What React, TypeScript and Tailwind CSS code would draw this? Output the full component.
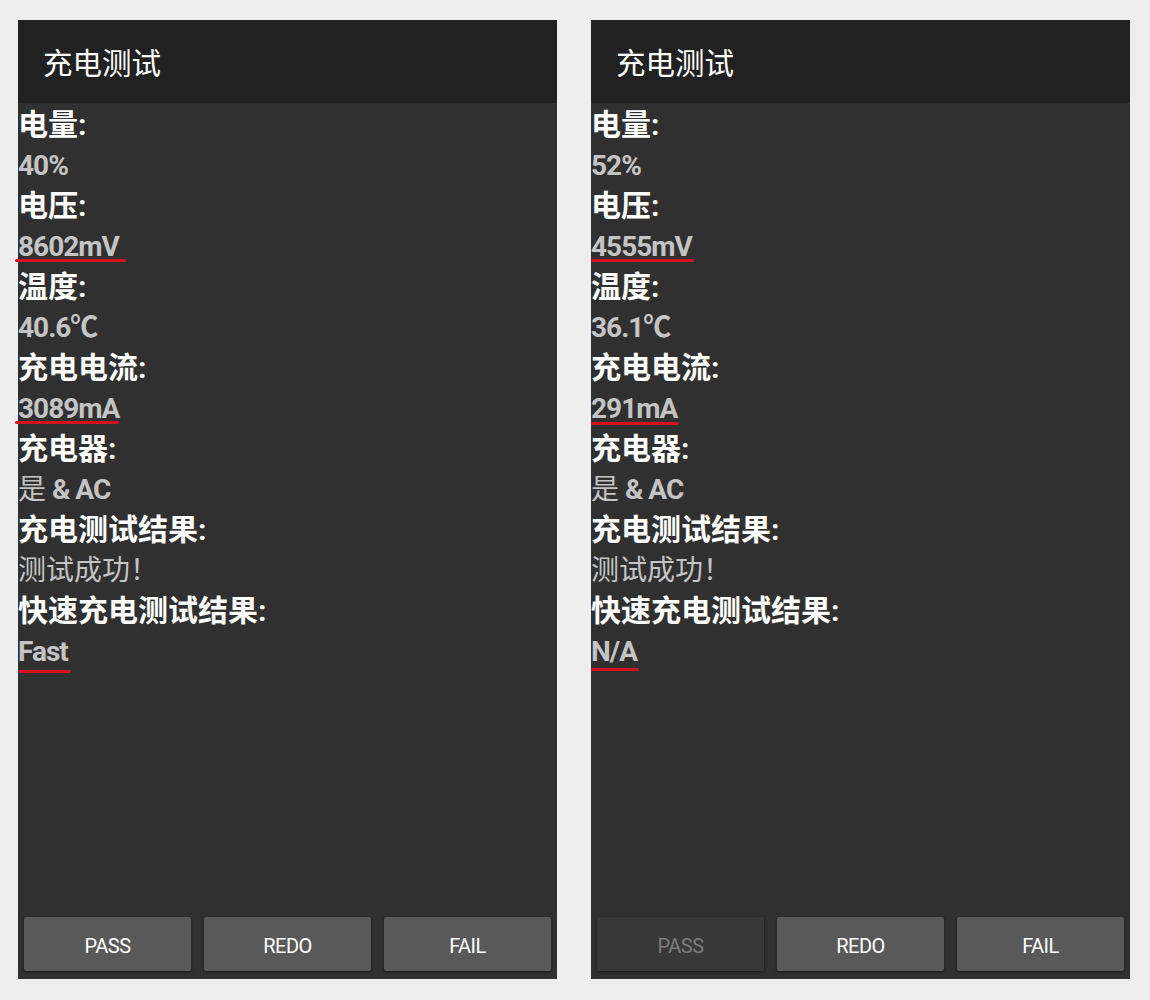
import React from 'react';

type Row = {
  label: string;
  value: React.ReactNode;
  mark?: string; // underline classes, only for the annotated values
};

const cjk = '"Roboto", "Noto Sans CJK SC", sans-serif';

const Value: React.FC<{ children: React.ReactNode; mark?: string }> = ({ children, mark }) => (
  <span className="relative inline-block">
    {children}
    {mark && <span className={`absolute h-[3px] bg-[#d3121c] rounded-full ${mark}`} />}
  </span>
);

const Screen: React.FC<{ rows: Row[]; passDisabled?: boolean }> = ({ rows, passDisabled }) => (
  <div className="w-[539px] h-[959px] flex flex-col bg-[#303030]">
    <div className="h-[83px] bg-[#212121] flex items-center pl-[25px] pt-[5px] text-white text-[29.5px]" style={{ fontFamily: cjk }}>
      充电测试
    </div>
    <div className="flex-1 flex flex-col pt-[2px]" style={{ fontFamily: cjk }}>
      {rows.map((r) => (
        <React.Fragment key={r.label}>
          <div className="leading-[40.5px] text-[30px] font-bold text-white">{r.label}</div>
          <div className="leading-[40.5px] text-[28px] font-bold text-[#c4c4c4] tracking-[-1px]">
            <Value mark={r.mark}>{r.value}</Value>
          </div>
        </React.Fragment>
      ))}
    </div>
    <div className="grid grid-cols-3 gap-[13px] px-[6px] pb-[8px]" style={{ fontFamily: '"Roboto", sans-serif' }}>
      {['PASS', 'REDO', 'FAIL'].map((b) => {
        const off = b === 'PASS' && passDisabled;
        return (
          <button
            key={b}
            className={`h-[54px] pt-[4px] rounded-[2px] text-[20px] tracking-[-0.5px] shadow-[0_1px_3px_rgba(0,0,0,0.5)] ${
              off ? 'bg-[#383838] text-[#7c7c7c]' : 'bg-[#595959] text-white'
            }`}
          >
            {b}
          </button>
        );
      })}
    </div>
  </div>
);

const Plain: React.FC<{ text: string }> = ({ text }) => <span className="font-normal tracking-normal">{text}</span>;

const App: React.FC = () => {
  const left: Row[] = [
    { label: '电量:', value: '40%' },
    { label: '电压:', value: '8602mV', mark: '-left-[3px] -right-[7px] bottom-[5px]' },
    { label: '温度:', value: '40.6℃' },
    { label: '充电电流:', value: '3089mA', mark: '-left-[3px] right-[0px] bottom-[5px]' },
    { label: '充电器:', value: <><Plain text="是" /> &amp; AC</> },
    { label: '充电测试结果:', value: <Plain text="测试成功！" /> },
    { label: '快速充电测试结果:', value: 'Fast', mark: 'left-[0px] -right-[3px] bottom-[-1px]' },
  ];
  const right: Row[] = [
    { label: '电量:', value: '52%' },
    { label: '电压:', value: '4555mV', mark: 'left-[0px] -right-[2px] bottom-[5px]' },
    { label: '温度:', value: '36.1℃' },
    { label: '充电电流:', value: '291mA', mark: 'left-[0px] -right-[2px] bottom-[4px]' },
    { label: '充电器:', value: <><Plain text="是" /> &amp; AC</> },
    { label: '充电测试结果:', value: <Plain text="测试成功！" /> },
    { label: '快速充电测试结果:', value: 'N/A', mark: 'left-[0px] -right-[2px] bottom-[1px]' },
  ];

  return (
    <div className="w-[1150px] h-[1000px] bg-[#eeeeee] flex gap-[34px] pl-[18px] pt-[20px]">
      <Screen rows={left} />
      <Screen rows={right} passDisabled />
    </div>
  );
};

export default App;
